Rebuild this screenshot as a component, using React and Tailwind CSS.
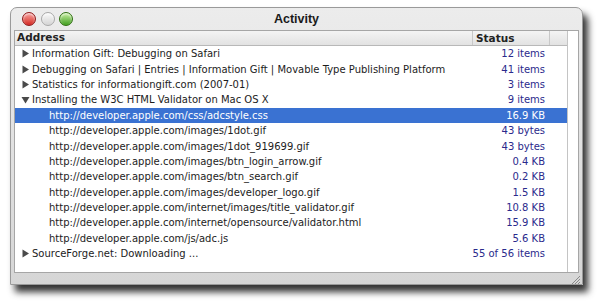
import React from "react";

const ROWS = [
    { label: "Information Gift: Debugging on Safari", status: "12 items", kind: "closed" },
    { label: "Debugging on Safari | Entries | Information Gift | Movable Type Publishing Platform", status: "41 items", kind: "closed" },
    { label: "Statistics for informationgift.com (2007-01)", status: "3 items", kind: "closed" },
    { label: "Installing the W3C HTML Validator on Mac OS X", status: "9 items", kind: "open" },
    { label: "http://developer.apple.com/css/adcstyle.css", status: "16.9 KB", kind: "child", selected: true },
    { label: "http://developer.apple.com/images/1dot.gif", status: "43 bytes", kind: "child" },
    { label: "http://developer.apple.com/images/1dot_919699.gif", status: "43 bytes", kind: "child" },
    { label: "http://developer.apple.com/images/btn_login_arrow.gif", status: "0.4 KB", kind: "child" },
    { label: "http://developer.apple.com/images/btn_search.gif", status: "0.2 KB", kind: "child" },
    { label: "http://developer.apple.com/images/developer_logo.gif", status: "1.5 KB", kind: "child" },
    { label: "http://developer.apple.com/internet/images/title_validator.gif", status: "10.8 KB", kind: "child" },
    { label: "http://developer.apple.com/internet/opensource/validator.html", status: "15.9 KB", kind: "child" },
    { label: "http://developer.apple.com/js/adc.js", status: "5.6 KB", kind: "child" },
    { label: "SourceForge.net: Downloading ...", status: "55 of 56 items", kind: "closed" },
];

const Light = ({ from, to, edge }) => (
    <span
        className={`block h-[14px] w-[14px] rounded-full border ${edge} ${from} ${to} bg-gradient-to-b shadow-[inset_0_1px_2px_rgba(255,255,255,0.8)]`}
    />
);

const Disclosure = ({ open }) => (
    <svg width="9" height="9" viewBox="0 0 9 9" className="shrink-0">
        {open ? <polygon points="0.5,2 8.5,2 4.5,8.5" fill="#4a4a4a" /> : <polygon points="1.5,0.5 8,4.5 1.5,8.5" fill="#4a4a4a" />}
    </svg>
);

export default function App() {
    return (
        <div className="h-[305px] w-[600px] bg-white pl-[10px] pt-[7px] font-['DejaVu_Sans',sans-serif]">
            <div className="flex h-[278px] w-[573px] flex-col rounded-t-[7px] border border-[#9a9a9a] bg-gradient-to-b from-[#ececec] to-[#d6d6d6] shadow-[5px_7px_7px_rgba(0,0,0,0.8)]">

                {/* title bar */}
                <div className="grid h-[22px] shrink-0 grid-cols-[1fr_auto_1fr] items-center px-[11px]">
                    <div className="flex items-center gap-[4.5px]">
                        <Light from="from-[#f6a0a0]" to="to-[#d21a1a]" edge="border-[#8e1a1a]" />
                        <Light from="from-[#fafafa]" to="to-[#d4d4d4]" edge="border-[#a8a8a8]" />
                        <Light from="from-[#c8f0a0]" to="to-[#3c9e12]" edge="border-[#2e6e10]" />
                    </div>
                    <div className="font-['Liberation_Sans',sans-serif] text-[12.5px] font-bold text-[#1a1a1a]">Activity</div>
                    <div />
                </div>

                {/* table */}
                <div className="mx-[3px] flex min-h-0 flex-1 border border-[#a6a6a6] bg-white">
                    <div className="flex min-w-0 flex-1 flex-col">
                        <div className="flex h-[15px] shrink-0 items-center border-b border-[#b8b8b8] bg-gradient-to-b from-[#f4f4f4] to-[#e2e2e2] text-[10.5px] font-bold text-[#222]">
                            <div className="w-[457px] pl-[2px]">Address</div>
                            <div className="h-full w-[77px] border-l border-[#c8c8c8] pl-[3px] leading-[15px]">Status</div>
                            <div className="h-full flex-1 border-l border-[#c8c8c8]" />
                        </div>
                        <div className="flex flex-col text-[10px]">
                            {ROWS.map((r, i) => (
                                <div
                                    key={i}
                                    className={`flex h-[15.4px] items-center ${r.selected ? "bg-[#3a72d2] text-white" : "text-[#1c1c1c]"}`}
                                >
                                    <div className="flex w-[457px] items-center gap-[2px] overflow-hidden whitespace-nowrap pl-[6px]">
                                        {r.kind === "child" ? (
                                            <span className="pl-[28px]">{r.label}</span>
                                        ) : (
                                            <>
                                                <Disclosure open={r.kind === "open"} />
                                                <span>{r.label}</span>
                                            </>
                                        )}
                                    </div>
                                    <div className={`w-[77px] whitespace-nowrap pr-[4px] text-right ${r.selected ? "text-white" : "text-[#2a2a8c]"}`}>
                                        {r.status}
                                    </div>
                                </div>
                            ))}
                        </div>
                    </div>
                    <div className="w-[11px] shrink-0 border-l border-[#c4c4c4] bg-white" />
                </div>

                {/* bottom bar */}
                <div className="flex h-[11px] shrink-0 items-end justify-end pr-[2px]">
                    <svg width="10" height="10" viewBox="0 0 10 10">
                        <line x1="2" y1="10" x2="10" y2="2" stroke="#8a8a8a" strokeWidth="1" />
                        <line x1="5" y1="10" x2="10" y2="5" stroke="#8a8a8a" strokeWidth="1" />
                        <line x1="8" y1="10" x2="10" y2="8" stroke="#8a8a8a" strokeWidth="1" />
                    </svg>
                </div>
            </div>
        </div>
    );
}
